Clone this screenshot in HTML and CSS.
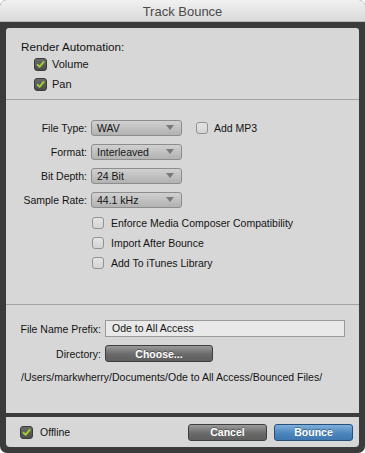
FILE: index.html
```html
<!DOCTYPE html>
<html lang="en">
<head>
    <meta charset="UTF-8">
    <meta name="viewport" content="width=device-width, initial-scale=1.0">
    <title>Track Bounce</title>
    <link rel="stylesheet" href="styles.css">
</head>
<body>
    <div class="window">
        <div class="titlebar">Track Bounce</div>
        <div class="frame">
            <div class="panel">
                <div class="section render">
                    <div class="heading">Render Automation:</div>
                    <label class="check-row indent">
                        <span class="box checked"><svg viewBox="0 0 13 13"><path d="M3 6.8 L5.4 9.3 L10.2 3.4" /></svg></span>
                        Volume
                    </label>
                    <label class="check-row indent">
                        <span class="box checked"><svg viewBox="0 0 13 13"><path d="M3 6.8 L5.4 9.3 L10.2 3.4" /></svg></span>
                        Pan
                    </label>
                </div>

                <div class="section format">
                    <div class="field">
                        <span class="label">File Type:</span>
                        <div class="select">WAV</div>
                        <label class="check-row mp3">
                            <span class="box"></span>
                            Add MP3
                        </label>
                    </div>
                    <div class="field">
                        <span class="label">Format:</span>
                        <div class="select">Interleaved</div>
                    </div>
                    <div class="field">
                        <span class="label">Bit Depth:</span>
                        <div class="select">24 Bit</div>
                    </div>
                    <div class="field">
                        <span class="label">Sample Rate:</span>
                        <div class="select">44.1 kHz</div>
                    </div>
                    <div class="options">
                        <label class="check-row"><span class="box"></span>Enforce Media Composer Compatibility</label>
                        <label class="check-row"><span class="box"></span>Import After Bounce</label>
                        <label class="check-row"><span class="box"></span>Add To iTunes Library</label>
                    </div>
                </div>

                <div class="section output">
                    <div class="field wide">
                        <span class="label">File Name Prefix:</span>
                        <div class="text-input">Ode to All Access</div>
                    </div>
                    <div class="field wide">
                        <span class="label">Directory:</span>
                        <button class="btn gray choose">Choose...</button>
                    </div>
                    <div class="path">/Users/markwherry/Documents/Ode to All Access/Bounced Files/</div>
                </div>
            </div>

            <div class="footer">
                <label class="check-row">
                    <span class="box checked"><svg viewBox="0 0 13 13"><path d="M3 6.8 L5.4 9.3 L10.2 3.4" /></svg></span>
                    Offline
                </label>
                <div class="actions">
                    <button class="btn gray">Cancel</button>
                    <button class="btn blue">Bounce</button>
                </div>
            </div>
        </div>
    </div>
</body>
</html>
```

FILE: styles.css
```css
body {
    margin: 0;
    background: #ffffff;
    font-family: "Liberation Sans", Arial, sans-serif;
    font-size: 10.5px;
    color: #141414;
}
.window {
    width: 365px;
    height: 453px;
    border-radius: 6px 6px 7px 7px;
    overflow: hidden;
    background: #3b3b3b;
    display: flex;
    flex-direction: column;
}
.titlebar {
    height: 22px;
    line-height: 23px;
    text-align: center;
    font-size: 13px;
    color: #4a4a4a;
    background: linear-gradient(#f1f1f1, #dadada);
    border-bottom: 1px solid #b9b9b9;
    box-sizing: border-box;
}
.frame {
    flex: 1;
    display: flex;
    flex-direction: column;
    padding: 6px 6px 6px 6px;
    gap: 4px;
}
.panel {
    height: 385px;
    background: #d7d7d7;
    border-radius: 3px 3px 0 0;
    display: flex;
    flex-direction: column;
}
.section {
    border-bottom: 1px solid #a3a3a3;
}
.section:last-child {
    border-bottom: none;
}
.render {
    height: 59px;
    padding: 12px 0 0 15px;
}
.heading {
    line-height: 14px;
    font-size: 11.7px;
}
.check-row {
    display: flex;
    align-items: center;
    height: 20px;
    gap: 6px;
}
.indent {
    margin-left: 13px;
    font-size: 11px;
}
.render .check-row {
    gap: 5px;
}
.box {
    width: 12px;
    height: 12px;
    box-sizing: border-box;
    border: 1px solid #929292;
    border-radius: 3px;
    background: linear-gradient(#e4e4e4, #d4d4d4);
    flex-shrink: 0;
}
.box.checked {
    width: 13px;
    height: 13px;
    border: 1px solid #3a3a3a;
    background: linear-gradient(#6a6a6a, #4c4c4c);
    display: flex;
}
.box svg {
    width: 11px;
    height: 11px;
}
.box path {
    fill: none;
    stroke: #9fd132;
    stroke-width: 2.2;
    stroke-linecap: round;
    stroke-linejoin: round;
}
.format {
    height: 184px;
    padding-top: 20px;
    display: flex;
    flex-direction: column;
    gap: 8px;
}
.field {
    display: flex;
    align-items: center;
    height: 16px;
    gap: 4px;
}
.label {
    width: 81px;
    text-align: right;
}
.select {
    position: relative;
    width: 91px;
    height: 16px;
    box-sizing: border-box;
    border: 1px solid #8d8d8d;
    border-radius: 3px;
    background: linear-gradient(#d0d0d0, #b2b2b2);
    padding-left: 5px;
    line-height: 15px;
    color: #151515;
}
.select::after {
    content: "";
    position: absolute;
    right: 7px;
    top: 4px;
    border-left: 4px solid transparent;
    border-right: 4px solid transparent;
    border-top: 5px solid #7a7a7a;
}
.mp3 {
    margin-left: 10px;
}
.options {
    margin-top: -3px;
    margin-left: 86px;
    display: flex;
    flex-direction: column;
}
.options .check-row {
    gap: 7px;
}
.output {
    flex: 1;
    padding-top: 15px;
    display: flex;
    flex-direction: column;
    gap: 8px;
}
.field.wide {
    height: 17px;
}
.wide .label {
    width: 95px;
}
.text-input {
    width: 240px;
    height: 17px;
    box-sizing: border-box;
    border: 1px solid #9a9a9a;
    background: #e9e9e9;
    padding-left: 6px;
    line-height: 15px;
}
.btn {
    font-family: "Liberation Sans", Arial, sans-serif;
    font-size: 10.5px;
    font-weight: bold;
    color: #ffffff;
    border-radius: 3px;
    padding: 0;
    height: 17px;
    cursor: pointer;
    text-shadow: 0 -1px 0 rgba(0, 0, 0, 0.35);
}
.btn.gray {
    border: 1px solid #3f3f3f;
    background: linear-gradient(#9a9a9a, #6a6a6a 55%, #5e5e5e);
}
.btn.blue {
    border: 1px solid #284f78;
    background: linear-gradient(#7fb0dc, #4c86be 55%, #3f77ae);
}
.choose {
    width: 108px;
}
.path {
    margin-left: 15px;
    line-height: 14px;
}
.footer {
    height: 30px;
    background: #d7d7d7;
    border-radius: 0 0 4px 4px;
    display: flex;
    align-items: center;
    justify-content: space-between;
    padding: 0 6px 0 14px;
}
.footer .check-row {
    gap: 7px;
}
.actions {
    display: flex;
    gap: 7px;
}
.actions .btn {
    width: 79px;
    height: 17px;
}
```
